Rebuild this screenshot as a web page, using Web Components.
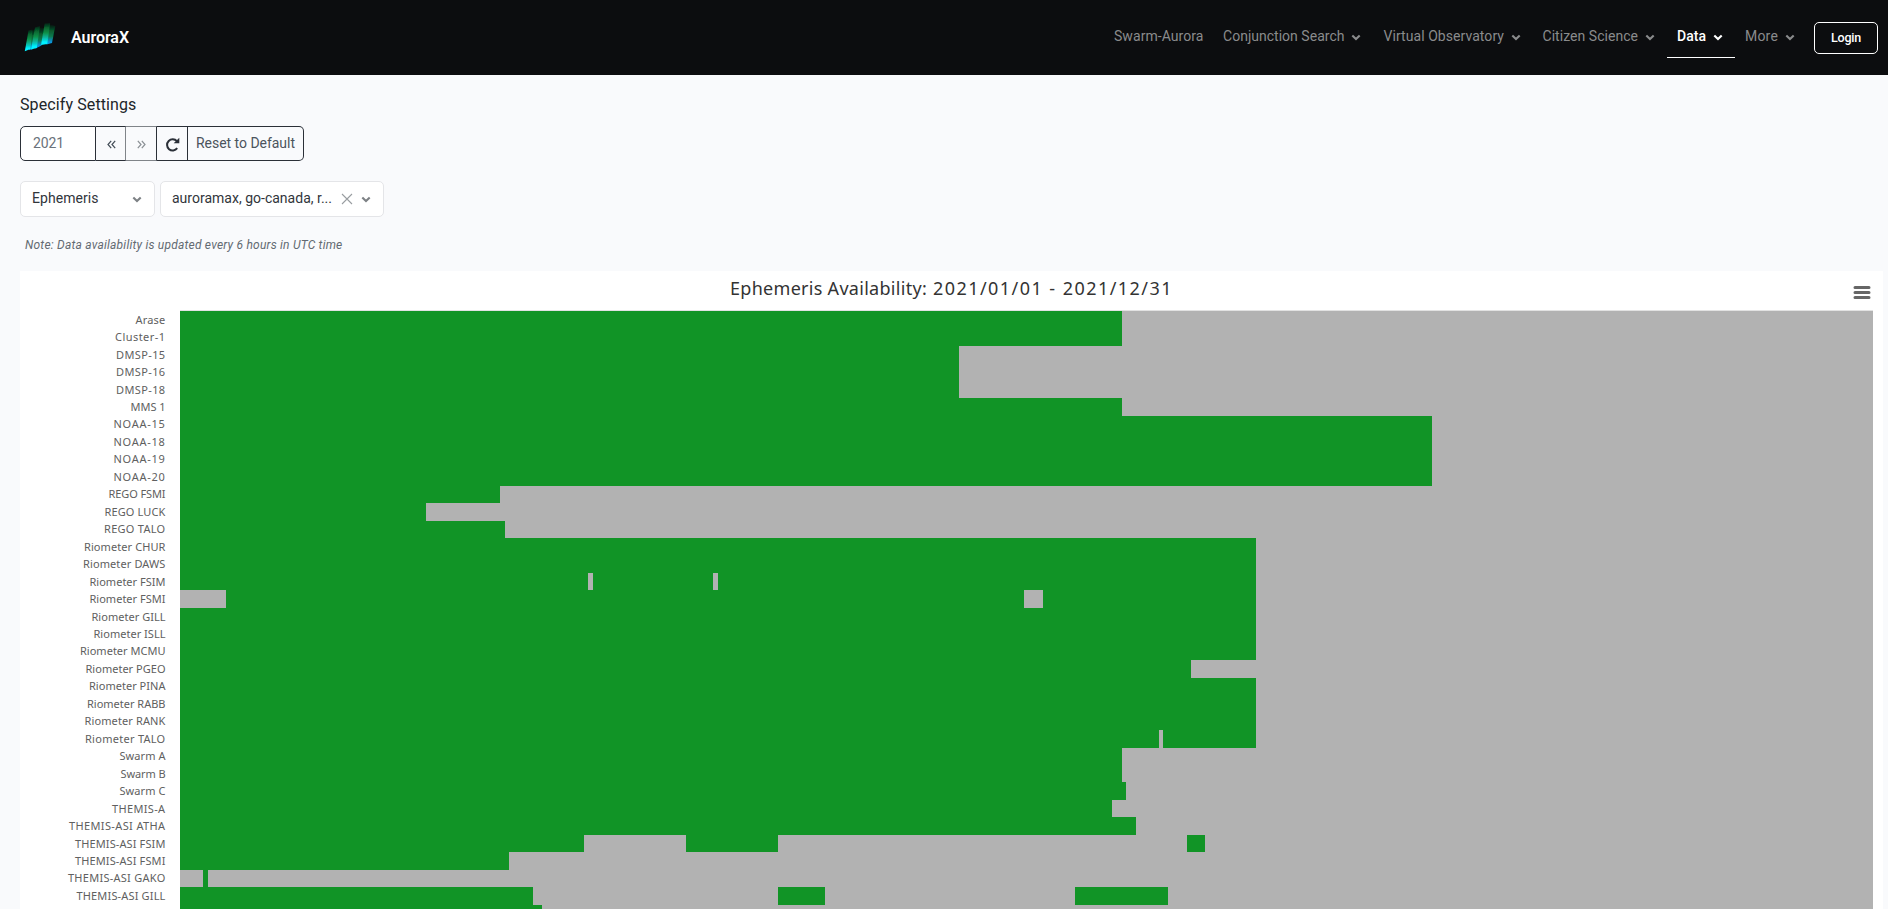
<!DOCTYPE html>
<html lang="en">
<head>
<meta charset="utf-8">
<title>AuroraX</title>
<style>
html,body{margin:0;height:100%;overflow:hidden;background:#f9fafc;font-family:Roboto,"Liberation Sans",sans-serif}
</style>
</head>
<body>
<ax-app></ax-app>
<script>
function define(name, html, setup) {
  customElements.define(name, class extends HTMLElement {
    connectedCallback() {
      if (this.shadowRoot) return;
      const t = document.createElement('template');
      t.innerHTML = html;
      this.attachShadow({ mode: 'open' }).appendChild(t.content.cloneNode(true));
      if (setup) setup(this, this.shadowRoot);
    }
  });
}

/* A single line of text, tracked so that it fills the width given in "w". */
define('ax-text', '<style>:host{display:inline-block;white-space:nowrap}span{display:inline-block}</style><span><slot></slot></span>', (el, root) => {
  const w = parseFloat(el.getAttribute('w'));
  const s = root.querySelector('span');
  const natural = s.getBoundingClientRect().width;
  const n = el.textContent.length;
  if (!w || !natural) return;
  s.style.letterSpacing = ((w - natural) / n).toFixed(3) + 'px';
});

define('ax-chevron', `<style>:host{display:block;width:10px;height:7px}svg{display:block}</style>
<svg width="10" height="7" viewBox="0 0 10 7"><path d="M1.3 1.4 5 5 8.7 1.4" fill="none" stroke="currentColor" stroke-width="2.1"/></svg>`);

define('ax-logo', `<style>:host{display:block;width:34px;height:32px}svg{display:block}</style>
<svg width="34" height="32" viewBox="0 0 34 32">
<defs>
<linearGradient id="g" x1="0" y1="0" x2="0" y2="1"><stop offset="0" stop-color="#064a22" stop-opacity=".35"/><stop offset=".2" stop-color="#07602d"/><stop offset=".45" stop-color="#079048"/><stop offset=".68" stop-color="#08b9a6"/><stop offset=".86" stop-color="#00f0ff"/><stop offset="1" stop-color="#00f0ff"/></linearGradient>
<linearGradient id="h" x1="0" y1="0" x2="0" y2="1"><stop offset="0" stop-color="#04351a" stop-opacity=".3"/><stop offset=".3" stop-color="#07592c"/><stop offset=".6" stop-color="#087a50"/><stop offset=".85" stop-color="#0a8fd0"/><stop offset="1" stop-color="#0a9fe8"/></linearGradient>
<filter id="f"><feGaussianBlur stdDeviation=".35"/></filter></defs>
<g filter="url(#f)">
<path fill="url(#h)" d="M8.5 9 12.5 7 10 27 6 28z"/>
<path fill="url(#h)" d="M15.5 5.5 21.5 6 18.5 23.5 12.5 26.5z"/>
<path fill="url(#h)" d="M26 2.5 32.3 4 29 21 23.5 22.5z"/>
<path fill="url(#g)" d="M5.5 8.5 9.5 7.5 7.5 27 1.8 29.3z"/>
<path fill="url(#g)" d="M12 5.5 17 4 13.8 26 8 27.6z"/>
<path fill="url(#g)" d="M21.7 1.5 27.2 1 24.3 22 18 23z"/>
</g></svg>`);

define('ax-nav-item', `<style>
:host{display:flex;box-sizing:border-box;height:43px;padding:0 0 1px 10px;align-items:center;color:#8a8b8c;font-size:14px;line-height:20px}
:host([active]){color:#fff;border-bottom:1px solid #fff;padding-bottom:0}
ax-chevron{margin:4px 0 0 6.5px}
:host([plain]) ax-chevron{display:none}
</style><slot></slot><ax-chevron></ax-chevron>`);

define('ax-header', `<style>
:host{display:flex;box-sizing:border-box;height:75px;background:#0c0d0f;padding:0 10px 0 23px;align-items:center;color:#fff}
.brand{font-size:16px;font-weight:600;line-height:20px;margin-left:14px}
nav{display:flex;margin-left:auto;padding-bottom:5px;margin-top:2px}
button{box-sizing:border-box;width:64px;height:32px;margin:1px 0 0 10px;padding:0;border:1px solid #fff;border-radius:5px;background:none;color:#fff;font:500 12.5px/16px Roboto,sans-serif}
</style>
<ax-logo></ax-logo><ax-text class="brand" w="58">AuroraX</ax-text>
<nav>
<ax-nav-item plain style="width:109px"><ax-text w="89.5">Swarm-Aurora</ax-text></ax-nav-item>
<ax-nav-item style="width:160.5px"><ax-text w="121.5">Conjunction Search</ax-text></ax-nav-item>
<ax-nav-item style="width:159px"><ax-text w="120.5">Virtual Observatory</ax-text></ax-nav-item>
<ax-nav-item style="width:134.5px"><ax-text w="95.5">Citizen Science</ax-text></ax-nav-item>
<ax-nav-item active style="width:68px"><ax-text style="font-weight:500" w="29">Data</ax-text></ax-nav-item>
<ax-nav-item style="width:69px"><ax-text w="33">More</ax-text></ax-nav-item>
</nav>
<button><ax-text w="30">Login</ax-text></button>`);

define('ax-year-bar', `<style>
:host{display:flex;box-sizing:border-box;width:284px;height:35px;font-size:14px;line-height:20px;color:#414b55}
div{box-sizing:border-box;border:1px solid #2b3038;border-left-width:0;display:flex;align-items:center;justify-content:center;padding-bottom:2px}
.y{width:76px;border-left-width:1px;border-radius:5px 0 0 5px;background:#fff;justify-content:flex-start;padding-left:12px;color:#6a727b}
.p{width:30px;padding:2px 0 0 1px}.n{width:31px;border-color:#808489;border-right-color:#2b3038;padding:2px 0 0;color:#8a8f94}
.p{border-right-color:#808489}.r{width:31px;padding:2px 0 0}
.d{flex:1;border-radius:0 5px 5px 0;color:#4c545d}
svg{display:block}
</style>
<div class="y"><ax-text w="31">2021</ax-text></div>
<div class="p"><svg width="9" height="9" viewBox="0 0 9 9"><path d="M4.2.9 1 4.5l3.2 3.6M8.2.9 5 4.5l3.2 3.6" fill="none" stroke="currentColor" stroke-width="1.2"/></svg></div>
<div class="n"><svg width="9" height="9" viewBox="0 0 9 9"><path d="M.8.9 4 4.5.8 8.1M4.8.9 8 4.5 4.8 8.1" fill="none" stroke="currentColor" stroke-width="1.2"/></svg></div>
<div class="r"><svg width="15" height="15" viewBox="0 0 15 15"><path d="M11.9 4.2A5.6 5.6 0 1 0 12.2 11.2" fill="none" stroke="#2b3038" stroke-width="2"/><path d="M14.3.8V6.2H8.7z" fill="#2b3038"/></svg></div>
<div class="d"><ax-text w="99">Reset to Default</ax-text></div>`);

define('ax-select', `<style>
:host{display:flex;box-sizing:border-box;height:36px;border:1px solid #e4e5e8;border-radius:5px;background:#fff;align-items:center;padding:0 12px 2px 11px;font-size:14px;line-height:20px;color:#31353b}
ax-chevron{color:#7d8185;margin-top:2px}
.x{display:none;margin:2px 8px 0 0}
:host([clearable]) .x{display:block}
.v{flex:1}
</style><span class="v"><slot></slot></span>
<svg class="x" width="12" height="12" viewBox="0 0 12 12"><path d="M1 1 11 11M11 1 1 11" stroke="#999da1" stroke-width="1.1"/></svg><ax-chevron></ax-chevron>`);

/* Each row: name, label width, then the [start, end] stretches with data, in plot pixels. */
const R = 1076, ROWS = [
['Arase',30,[0,942]],['Cluster-1',50.5,[0,942]],['DMSP-15',49.5,[0,779]],['DMSP-16',49.5,[0,779]],['DMSP-18',49.5,[0,779]],
['MMS 1',35,[0,942]],['NOAA-15',52,[0,1252]],['NOAA-18',52,[0,1252]],['NOAA-19',52,[0,1252]],['NOAA-20',52,[0,1252]],
['REGO FSMI',57,[0,320]],['REGO LUCK',61,[0,246]],['REGO TALO',61.5,[0,325]],
['Riometer CHUR',81.5,[0,R]],['Riometer DAWS',82.5,[0,R]],['Riometer FSIM',76,[0,408],[413,533],[538,R]],
['Riometer FSMI',76,[46,844],[863,R]],['Riometer GILL',74,[0,R]],['Riometer ISLL',72,[0,R]],['Riometer MCMU',85.5,[0,R]],
['Riometer PGEO',80,[0,1011]],['Riometer PINA',76.5,[0,R]],['Riometer RABB',78.5,[0,R]],['Riometer RANK',81,[0,R]],
['Riometer TALO',80.5,[0,979],[983,R]],['Swarm A',46,[0,942]],['Swarm B',45,[0,942]],['Swarm C',46,[0,946]],
['THEMIS-A',53.5,[0,932]],['THEMIS-ASI ATHA',96.5,[0,956]],['THEMIS-ASI FSIM',90.5,[0,404],[506,598],[1007,1025]],
['THEMIS-ASI FSMI',90.5,[0,329]],['THEMIS-ASI GAKO',97.5,[23,28]],['THEMIS-ASI GILL',89,[0,353],[598,645],[895,988]],
['',0,[0,362]]];

define('ax-row', `<style>
:host{display:grid;grid-template-columns:145.5px 1693px;column-gap:14.5px}
.l{display:flex;justify-content:flex-end;align-items:center;font:11px/14px "Noto Sans",sans-serif;color:#606060;height:17px;padding-top:1px;box-sizing:border-box}
.t{display:flex;background:#b2b2b2}
.t i{display:block;background:#119426}
</style><div class="l"></div><div class="t"></div>`);

define('ax-chart', `<style>
:host{display:block;width:1863px;height:638px;background:#fff;overflow:hidden}
header{display:grid;grid-template-columns:710px 203px 1fr auto;height:39px;align-items:start}
.t{font:18px/24px "Noto Sans",sans-serif;color:#333;margin-top:5px}
.t:first-child{grid-column:2}
svg{display:block;margin:14px 12px 0 0}
.rule{height:1px;width:1693px;margin-left:160px;background:#e2e2e2}
</style>
<header><ax-text class="t" w="197">Ephemeris Availability:</ax-text><ax-text class="t" w="240">2021/01/01 - 2021/12/31</ax-text>
<svg width="18" height="15" viewBox="0 0 18 15"><path d="M2 2.5H16M2 7.5H16M2 12.5H16" stroke="#666" stroke-width="3" stroke-linecap="round"/></svg></header>
<div class="rule"></div><div class="rows"></div>`, (el, root) => {
  const box = root.querySelector('.rows');
  ROWS.forEach(([name, w, ...spans], i) => {
    const row = document.createElement('ax-row');
    const top = 17.46 * i;
    row.style.height = Math.round(17.46 * (i + 1)) - Math.round(top) + 'px';
    box.appendChild(row);
    const r = row.shadowRoot;
    const label = r.querySelector('.l');
    label.style.marginTop = Math.floor(top + 0.2) - Math.round(top) + 'px';
    if (name) label.innerHTML = `<ax-text w="${w}">${name}</ax-text>`;
    let at = 0;
    for (const [a, b] of spans) {
      const bar = document.createElement('i');
      bar.style.cssText = `margin-left:${a - at}px;width:${b - a}px`;
      r.querySelector('.t').appendChild(bar);
      at = b;
    }
  });
});

define('ax-app', `<style>
:host{display:block;height:909px;overflow:hidden}
main{display:flex;flex-direction:column;align-items:flex-start;padding-left:20px}
.h{font-size:16px;font-weight:450;line-height:20px;color:#212529;margin-top:20px}
ax-year-bar{margin-top:11px}
.s{display:flex;gap:5px;margin-top:20px}
.n{font-size:12px;font-style:italic;line-height:16px;color:#636a72;margin:20px 0 18px 5px}
</style>
<ax-header></ax-header>
<main>
<ax-text class="h" w="116.5">Specify Settings</ax-text>
<ax-year-bar></ax-year-bar>
<div class="s"><ax-select style="width:135px"><ax-text w="66.5">Ephemeris</ax-text></ax-select><ax-select clearable style="width:224px"><ax-text w="160">auroramax, go-canada, r...</ax-text></ax-select></div>
<ax-text class="n" w="317.5">Note: Data availability is updated every 6 hours in UTC time</ax-text>
<ax-chart></ax-chart>
</main>`);
</script>
</body>
</html>
